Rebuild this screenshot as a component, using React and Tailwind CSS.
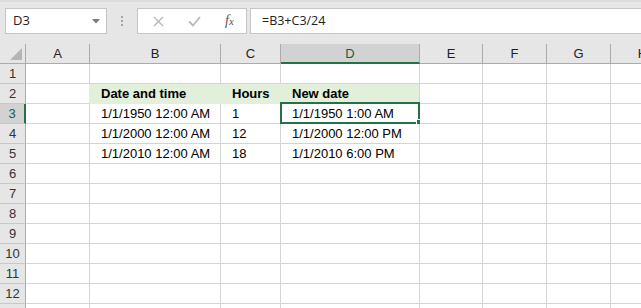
import React from "react"

const cols = ["A", "B", "C", "D", "E", "F", "G", "H"]
const widths = ["w-[64px]", "w-[131px]", "w-[60px]", "w-[139px]", "w-[63px]", "w-[64px]", "w-[64px]", "w-[64px]"]

const data = {
  2: { B: "Date and time", C: "Hours", D: "New date" },
  3: { B: "1/1/1950 12:00 AM", C: "1", D: "1/1/1950 1:00 AM" },
  4: { B: "1/1/2000 12:00 AM", C: "12", D: "1/1/2000 12:00 PM" },
  5: { B: "1/1/2010 12:00 AM", C: "18", D: "1/1/2010 6:00 PM" },
}

const filled = ["B", "C", "D"]

function Toolbar() {
  return (
    <div className="h-[44px] bg-[#e6e6e6] border-t-2 border-[#dcdcdc] flex items-start pt-[6px] pl-[5px]">
      {/* Name box */}
      <div className="w-[102px] h-[26px] bg-white border border-[#c6c6c6] flex items-center justify-between pl-[7px] pr-[6px]">
        <span className="text-[13px] text-[#222] font-['Open_Sans',sans-serif]">D3</span>
        <svg width="8" height="5" viewBox="0 0 8 5">
          <path d="M0 0 L8 0 L4 4.5 Z" fill="#7a7a7a" />
        </svg>
      </div>
      {/* grip dots */}
      <div className="w-[30px] h-[26px] flex flex-col items-center justify-center gap-[2px]">
        <span className="w-[2px] h-[2px] bg-[#a6a6a6]" />
        <span className="w-[2px] h-[2px] bg-[#a6a6a6]" />
        <span className="w-[2px] h-[2px] bg-[#a6a6a6]" />
      </div>
      {/* cancel / enter / fx */}
      <div className="w-[110px] h-[26px] bg-white border border-[#c6c6c6] flex items-center">
        <div className="w-[37px] flex justify-center pl-[4px]">
          <svg width="11" height="11" viewBox="0 0 11 11">
            <path d="M1 1 L10 10 M10 1 L1 10" stroke="#b8b8b8" strokeWidth="1.4" fill="none" />
          </svg>
        </div>
        <div className="w-[36px] flex justify-center pl-[3px]">
          <svg width="13" height="11" viewBox="0 0 13 11">
            <path d="M1 5.5 L5 9.5 L12 1" stroke="#b8b8b8" strokeWidth="1.8" fill="none" />
          </svg>
        </div>
        <div className="flex-1 flex justify-center pl-[2px]">
          <span className="text-[14px] italic font-['Liberation_Serif',serif] text-[#555] leading-none">
            f<span className="text-[11px]">x</span>
          </span>
        </div>
      </div>
      {/* formula */}
      <div className="ml-[3px] flex-1 h-[26px] bg-white border border-r-0 border-[#c6c6c6] flex items-center pl-[11px]">
        <span className="text-[12.5px] text-[#222] font-['Open_Sans',sans-serif]">=B3+C3/24</span>
      </div>
    </div>
  )
}

function HeaderRow() {
  return (
    <div className="flex h-[20px]">
      <div className="w-[26px] shrink-0 bg-[#e6e6e6] border-r border-b border-[#ababab] relative">
        <svg className="absolute left-[10px] top-[4px]" width="13" height="13" viewBox="0 0 13 13">
          <path d="M12 0 L12 12 L0 12 Z" fill="#b5b5b5" />
        </svg>
      </div>
      {cols.map((c, i) => {
        const sel = c === "D"
        return (
          <div
            key={c}
            className={`${widths[i]} shrink-0 border-r border-[#ababab] flex items-center justify-center text-[13px] leading-[19px] font-['Liberation_Sans',sans-serif] ${
              sel ? "bg-[#d2d2d2] border-b-2 border-b-[#217346] text-[#1e5c3a]" : "bg-[#e6e6e6] border-b border-b-[#ababab] text-[#222]"
            }`}
          >
            {c}
          </div>
        )
      })}
    </div>
  )
}

function Row({ n }) {
  const sel = n === 3
  const row = data[n] || {}
  return (
    <div className="flex h-[20px]">
      <div
        className={`w-[26px] shrink-0 border-b border-b-[#c8c8c8] flex items-center justify-center text-[13px] leading-[19px] font-['Liberation_Sans',sans-serif] ${
          sel ? "bg-[#d2d2d2] border-r-2 border-r-[#217346] text-[#1e5c3a]" : "bg-[#e6e6e6] border-r border-r-[#ababab] text-[#333]"
        }`}
      >
        {n}
      </div>
      {cols.map((c, i) => {
        const fill = n === 2 && filled.includes(c)
        const beforeFill = n === 2 && c === "A"
        const rightFill = fill && c !== "D"
        return (
          <div
            key={c}
            className={`${widths[i]} shrink-0 relative border-r border-b whitespace-nowrap pl-[11px] text-[13px] leading-[19px] text-black font-['Liberation_Sans',sans-serif] ${
              fill ? "bg-[#e2efda] font-bold border-b-[#e2efda]" : "bg-white border-b-[#d4d4d4]"
            } ${rightFill || beforeFill ? "border-r-[#e2efda]" : "border-r-[#d4d4d4]"}`}
          >
            {row[c]}
            {sel && c === "D" && (
              <div className="absolute left-[-1px] top-[-2px] w-[140px] h-[22px] border-2 border-[#217346] pointer-events-none">
                <div className="absolute left-[134px] top-[15px] w-[8px] h-[8px] bg-[#217346] border border-white" />
              </div>
            )}
          </div>
        )
      })}
    </div>
  )
}

export default function App() {
  const rows = Array.from({ length: 13 }, (_, i) => i + 1)
  return (
    <div className="w-[641px] h-[308px] overflow-hidden bg-white select-none">
      <Toolbar />
      <div className="w-[700px]">
        <HeaderRow />
        {rows.map(n => (
          <Row key={n} n={n} />
        ))}
      </div>
    </div>
  )
}
